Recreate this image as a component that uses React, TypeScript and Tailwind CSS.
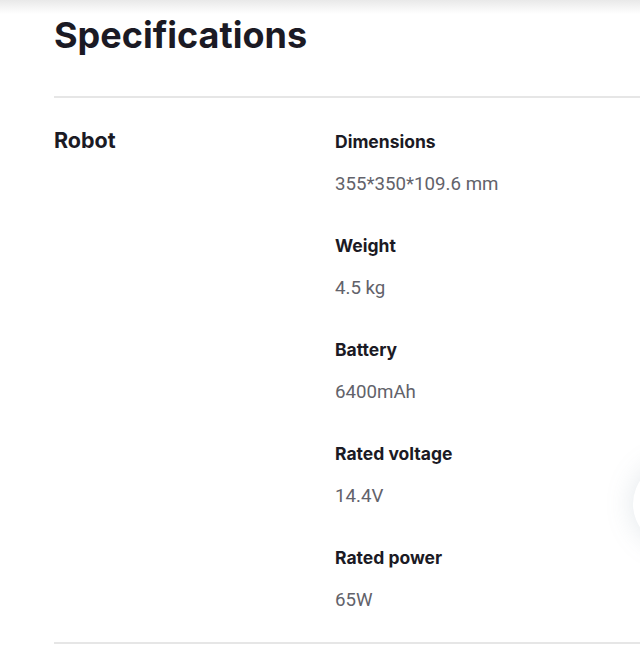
import React from "react";

interface Spec {
  label: string;
  value: string;
}

const specs: Spec[] = [
  { label: "Dimensions", value: "355*350*109.6 mm" },
  { label: "Weight", value: "4.5 kg" },
  { label: "Battery", value: "6400mAh" },
  { label: "Rated voltage", value: "14.4V" },
  { label: "Rated power", value: "65W" },
];

const App: React.FC = () => {
  return (
    <div className="relative min-h-[672px] w-[640px] overflow-hidden bg-white">
      <div className="h-[14px] bg-gradient-to-b from-[#e9e9e9] to-white" />

      <div className="pl-[54px]">
        <h1 className="pb-[40px] text-[36px] font-bold leading-[42px] text-[#1b1a24] [font-family:Inter,'Noto_Sans',sans-serif]">
          Specifications
        </h1>

        <div className="grid grid-cols-[281px_1fr] border-t-2 border-b-2 border-[#e6e6e6] pt-[32px] pb-[30px]">
          <h2 className="text-[21.5px] font-bold leading-[20px] text-[#1b1a24] [font-family:Inter,'Noto_Sans',sans-serif]">
            Robot
          </h2>
          <div className="flex flex-col gap-[38px]">
            {specs.map((spec) => (
              <div key={spec.label} className="flex flex-col gap-[18px]">
                <span className="text-[17.5px] font-bold leading-[24px] text-[#1b1a24] [font-family:Inter,'Noto_Sans',sans-serif]">
                  {spec.label}
                </span>
                <span className="text-[18.7px] leading-[24px] text-[#62626a] [font-family:Roboto,'Noto_Sans',sans-serif]">
                  {spec.value}
                </span>
              </div>
            ))}
          </div>
        </div>
      </div>

      <div className="absolute left-[633px] top-[462px] h-[84px] w-[84px] rounded-full bg-white shadow-[0_0_28px_rgba(120,140,160,0.22)]" />
    </div>
  );
};

export default App;
